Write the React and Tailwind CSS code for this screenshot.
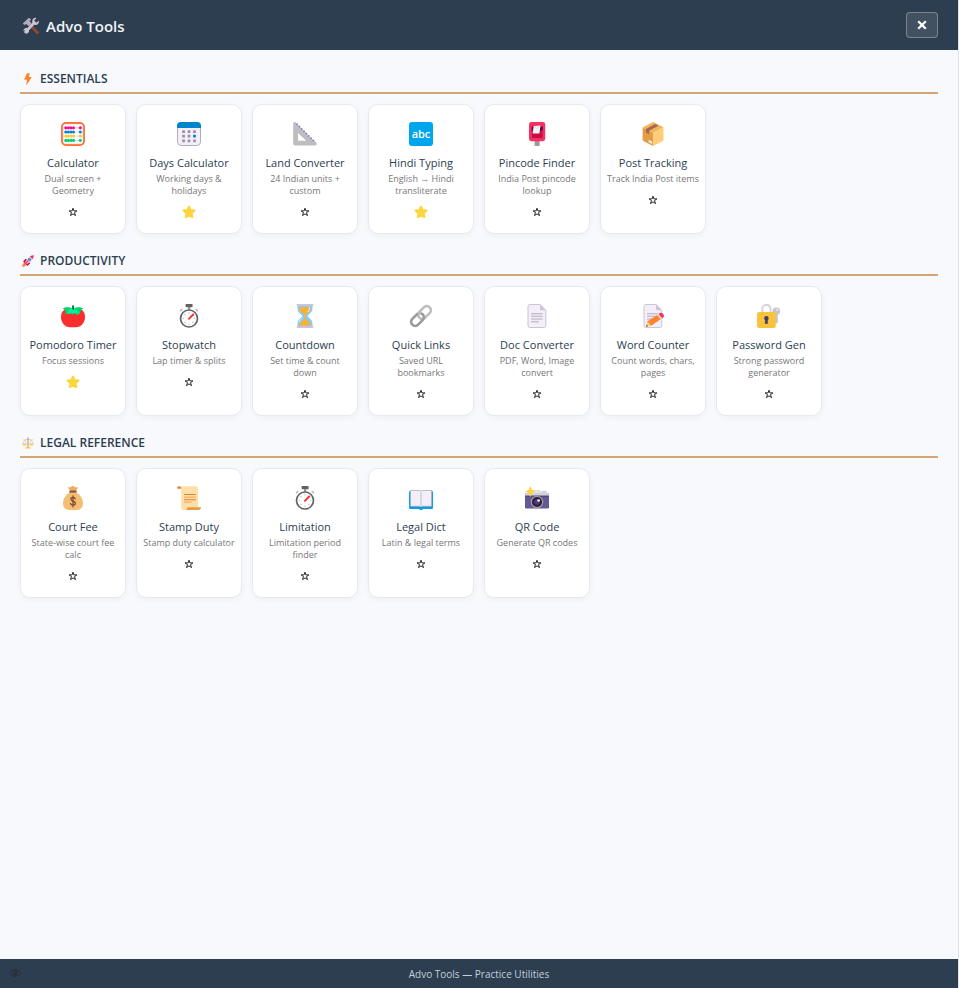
import React, { useState } from "react";

function Icon({ size = "size-6", box = 24, children }) {
  return (
    <svg className={size} viewBox={`0 0 ${box} ${box}`} fill="none" aria-hidden="true">
      {children}
    </svg>
  );
}

function AbacusIcon() {
  const rows = [
    [5.8, "#f70a8d"],
    [10, "#0084ce"],
    [14.1, "#ffc93d"],
    [18.4, "#00d26a"],
  ];
  return (
    <Icon>
      <rect x="1" y="1" width="22" height="22" rx="4" fill="#fff" stroke="#ff6f35" strokeWidth="1.9" />
      <rect x="2.3" y="2.3" width="19.4" height="19.4" rx="2.4" stroke="#e4e4e8" strokeWidth=".8" />
      {rows.map(([y, color]) => (
        <g key={y}>
          <path d={`M2.5 ${y}H21.5`} stroke="#c5c5cc" strokeWidth=".7" />
          <ellipse cx="4.8" cy={y} rx="1.5" ry="1.6" fill={color} />
          <ellipse cx="7.4" cy={y} rx="1.5" ry="1.6" fill={color} />
          <ellipse cx="10" cy={y} rx="1.5" ry="1.6" fill={color} />
          <ellipse cx="12.5" cy={y} rx="1.5" ry="1.6" fill={color} />
          <ellipse cx="19.3" cy={y} rx="1.5" ry="1.6" fill={color} />
        </g>
      ))}
    </Icon>
  );
}

function CalendarIcon() {
  const cells = [];
  [9.7, 14.2, 18.8].forEach((y, r) =>
    [6.6, 12, 17.5].forEach((x, c) =>
      cells.push(
        <rect key={`${r}${c}`} x={x - 1.35} y={y - 1.35} width="2.7" height="2.7" rx=".5" fill={r === 1 && c === 2 ? "#0084ce" : "#998ea4"} />
      )
    )
  );
  return (
    <Icon>
      <rect x=".5" y=".5" width="23" height="23" rx="3.6" fill="#f3eef8" stroke="#b4acbc" strokeWidth="1" />
      <path d="M0 6V4a4 4 0 0 1 4-4h16a4 4 0 0 1 4 4v2z" fill="#0084ce" />
      {cells}
    </Icon>
  );
}

function TriangleIcon() {
  return (
    <Icon>
      <path d="M.2 1.6C.2.2 1.800-.4 2.800.6l20.400 20.300c1 1 .4 2.600-1 2.600H2a1.800 1.800 0 0 1-1.800-1.800zM5 11v6.700a1 1 0 0 0 1 1h7.200z" fill="#bebebe" fillRule="evenodd" />
      <path d="M3.600 1.800 22.500 20.700" stroke="#8d65c5" strokeWidth="1.500" strokeDasharray="1.300 2" />
    </Icon>
  );
}

function AbcIcon() {
  return (
    <span className="flex size-6 items-center justify-center rounded-[3px] bg-[#00a6ed] pb-px font-['Open_Sans','Noto_Sans',sans-serif] text-[11px] leading-5 font-semibold text-white">
      abc
    </span>
  );
}

function PostboxIcon() {
  return (
    <Icon>
      <rect x="9.600" y="18" width="5" height="6" fill="#9b9b9b" />
      <rect x="4" y="0" width="16.200" height="19.200" rx="2.400" fill="#f92f60" />
      <rect x="6.800" y="3.800" width="10.800" height="12.200" rx="1" fill="#ca0b4a" />
      <path d="M6.800 5h10.800v3.400H6.800z" fill="#321b41" />
      <path d="m8.700 4 6.800-.6-1.100 8-6.800.200z" fill="#f4f4f4" />
      <path d="m9.500 4.200 2 2.400 3-2.500" stroke="#d3c9dc" strokeWidth=".7" />
    </Icon>
  );
}

function PackageIcon() {
  return (
    <Icon>
      <path d="M1.600 5.500 12 0l10.500 5.300L12 11z" fill="#f3b45b" />
      <path d="M1.600 5.500 12 10.800V24L2.800 19.200a2 2 0 0 1-1.200-1.800z" fill="#e39d43" />
      <path d="M22.500 5.300 12 10.800V24l9.400-4.800a2 2 0 0 0 1.100-1.800z" fill="#ffce7c" />
      <path d="M5 3.700 8.200 2l9.400 5v3.600l-3.200 1.600V8.700z" fill="#a56953" transform="matrix(-1 0 0 1 22.500 0)" />
      <path d="m7.700 17.700 3.400 1.700v2.500l-3.400-1.700z" fill="#f0eef0" />
    </Icon>
  );
}

function TomatoIcon() {
  return (
    <Icon>
      <path d="M7 4.500h10c4 0 7 3.600 7 8.500 0 6-4 10.200-9 10.200H9C4 23.200 0 19 0 13c0-4.900 3-8.500 7-8.500z" fill="#f92f2f" />
      <path d="M1.600 4.500C5 2.500 8.500 3 11 4.400V2h2v2.400c2.500-1.400 6-1.900 9.200.1-1.400.4-2 1.300-2.500 2.500-.6 1.900-1.900 3.300-4.300 4.300-.2-1.300-.9-2-1.800-2.500L12 11 9.800 8.500C8.300 9.200 6.500 10 4.200 10.400 5 8.500 4.600 5.500 1.600 4.500z" fill="#00d26a" />
      <path d="M8.500 4.900c1-.4 2.200 0 2.700.3h3.300l2.500 1.600 2 3.200-3-.8-3 .1-3.200.3-4 .4c1.200-1.700 1.500-4.200 2.700-5.100z" fill="#00f397" />
      <rect x="11" y="1.300" width="2.100" height="4.500" rx="1" fill="#008463" />
    </Icon>
  );
}

function StopwatchIcon() {
  const ticks = [0, 45, 90, 135, 180, 225, 270, 315];
  return (
    <Icon>
      <rect x="11" y="2" width="2.200" height="4" fill="#9b9b9b" />
      <rect x="8.600" y="-.1" width="7" height="3.300" rx=".8" fill="#636363" />
      <path d="m4.700 5.600-1 1.100M19.300 5.600l1 1.100" stroke="#c4c4c4" strokeWidth="2" strokeLinecap="round" />
      <circle cx="12" cy="14.500" r="8.500" fill="#fff" stroke="#636363" strokeWidth="1.700" />
      {ticks.map((angle) => (
        <path key={angle} d="M12 8.200v1.300" stroke="#b8bec4" strokeWidth="1.200" transform={`rotate(${angle} 12 14.5)`} />
      ))}
      <path d="m11.900 14.800 4.300-4.300" stroke="#f8312f" strokeWidth="1.900" strokeLinecap="round" />
    </Icon>
  );
}

function HourglassIcon() {
  return (
    <Icon>
      <path d="M4.500 1.500h15v2.700c0 4-3.600 5.800-5 7.800 1.400 2 5 3.800 5 7.800v2.700h-15v-2.700c0-4 3.600-5.800 5-7.800-1.400-2-5-3.800-5-7.800z" fill="#83cbff" />
      <path d="M6 3.200h12c0 4-3.200 5.400-5.200 7.400v5c3 1.600 5 3.600 5.200 6H6c.2-2.400 2.400-4.400 5.200-6v-5C9.200 8.600 6 7.200 6 3.200z" fill="#ffb02e" />
      <path d="M16.500 3.500c.4 1.800-.4 3.200-1.600 4.300" stroke="#fff" strokeOpacity=".8" strokeWidth="1" strokeLinecap="round" />
      <path d="M9.300 14c-1.700 1.200-2.800 2.500-3 4" stroke="#fff" strokeOpacity=".7" strokeWidth=".8" strokeLinecap="round" />
      <rect x="3.700" y="0" width="16.600" height="2" rx=".5" fill="#cdc4d6" />
      <rect x="3.700" y="22" width="16.600" height="2" rx=".5" fill="#cdc4d6" />
    </Icon>
  );
}

function LinkIcon() {
  return (
    <Icon>
      <rect x="-4.100" y="-7.300" width="8.200" height="14.600" rx="4.100" transform="translate(15.500 8.500) rotate(45)" stroke="#bebebe" strokeWidth="2.700" />
      <rect x="-4.100" y="-7.300" width="8.200" height="14.600" rx="4.100" transform="translate(8.500 15.500) rotate(45)" stroke="#9b9b9b" strokeWidth="2.700" />
      <path d="m9 10.200 3-3" stroke="#bebebe" strokeWidth="2.700" />
    </Icon>
  );
}

function PageShape() {
  return (
    <>
      <path d="M3 2.400A1.900 1.900 0 0 1 4.900.5h10.300l5.600 5.800v15.300a1.900 1.900 0 0 1-1.900 1.900h-14A1.900 1.900 0 0 1 3 21.600z" fill="#f3eef8" stroke="#cdc4d6" />
      <path d="M15 .5v4.200c0 .9.700 1.600 1.600 1.600h4.200z" fill="#cdc4d6" />
    </>
  );
}

function DocumentIcon() {
  return (
    <Icon>
      <PageShape />
      <path d="M6.500 9.700h10.800M6.500 12.300h10.800M6.500 15h10.800M6.500 17.700h7" stroke="#b4acbc" strokeWidth="1.100" strokeLinecap="round" />
    </Icon>
  );
}

function MemoIcon() {
  return (
    <Icon>
      <PageShape />
      <path d="M6.500 9.700h10M6.500 12.300h9M6.500 15h6M6.500 17.700h3" stroke="#b4acbc" strokeWidth="1.100" strokeLinecap="round" />
      <path d="m5.200 22.600 1.300-5.300 3.700 4.400z" fill="#ffce7c" />
      <path d="m5.200 22.600.5-2 1.300 1.600z" fill="#402a32" />
      <path d="m6.500 17.300 9.700-6.400 3.700 4.200-9.700 6.600z" fill="#ff822d" />
      <path d="m16.200 10.900 1.400-1 3.700 4.300-1.400.9z" fill="#d3d3d3" />
      <path d="m17.600 9.900 1.500-1c1.900-1.100 5 2.500 3.500 4.200l-1.300 1.100z" fill="#f92f60" />
    </Icon>
  );
}

function LockKeyIcon() {
  return (
    <Icon>
      <circle cx="19.300" cy="7.300" r="3.800" fill="#c5c5c5" />
      <circle cx="20.200" cy="5.800" r=".9" fill="#fff" />
      <path d="M18.200 9h2.600v9.700l-1.300 1-1.300-1z" fill="#c5c5c5" />
      <path d="M5.300 9V4.900a4.100 4.100 0 0 1 8.200 0V9" stroke="#d3d3d3" strokeWidth="1.900" />
      <rect x="0" y="8" width="18.800" height="16" rx="2.300" fill="#f9c23c" />
      <circle cx="9.400" cy="14.200" r="2.200" fill="#433b6b" />
      <path d="M8.500 14.500h1.800l.4 5H8.100z" fill="#433b6b" stroke="#433b6b" strokeWidth=".5" />
    </Icon>
  );
}

function MoneyBagIcon() {
  return (
    <Icon>
      <path d="m9.400 5-3-4C8 1.600 9 1.600 10 .8c1-1 2.500-1 3.600 0 1 .9 2.400.7 4 .4L14.600 5z" fill="#f3ad61" />
      <path d="M9 6.500h6c4 1.500 7 6.500 7 11 0 4-2.600 6.500-6.500 6.500h-7C4.600 24 2 21.500 2 17.500c0-4.500 3-9.500 7-11z" fill="#f3bd72" />
      <rect x="8.200" y="4.600" width="7.600" height="2.200" rx="1.100" fill="#8c5543" />
      <path d="M14.200 12.800c-.3-1.100-1-1.500-2.200-1.500-1.400 0-2.200.7-2.200 1.800 0 2.700 4.600 1.400 4.600 4.200 0 1.200-.9 1.900-2.400 1.900-1.400 0-2.300-.6-2.500-1.900M12 9.800v11" stroke="#7d4533" strokeWidth="1.200" strokeLinecap="round" />
    </Icon>
  );
}

function ScrollIcon() {
  return (
    <Icon>
      <path d="M2 .3h16.800A2.200 2.200 0 0 1 21 2.500V22a2 2 0 0 1-2 2H6.200a2 2 0 0 1-2-2V2.500z" fill="#ffdea7" />
      <path d="M0 2C0 .9.800.2 2 .2s2.200.8 2.200 2.500H1.400C.6 2.700 0 2.600 0 2z" fill="#d3883e" />
      <path d="M10.500 21.200H24c0 1.700-1 2.800-2.600 2.800H8.600c1.100-.5 1.700-1.400 1.900-2.800z" fill="#e39d43" />
      <path d="M7 8.500h12M7 13.700h12" stroke="#d3883e" strokeWidth="1.100" />
      <path d="M7 11.100h12M7 16.200h7.500" stroke="#f3ad61" strokeWidth="1.300" />
    </Icon>
  );
}

function BookIcon() {
  return (
    <Icon>
      <path d="M0 6.300A1.300 1.300 0 0 1 1.300 5h21.400A1.300 1.300 0 0 1 24 6.300v15.400a1.300 1.300 0 0 1-1.300 1.300h-8.600c-.4.700-1 1-2.100 1s-1.700-.3-2.100-1H1.300A1.300 1.300 0 0 1 0 21.700z" fill="#00a6ed" />
      <path d="M1 20.500h22v.8h-9.500l-1.500.7-1.500-.7H1z" fill="#0074ba" />
      <path d="M1.500 4.500h8.800c.8 0 1.300.2 1.700.6.400-.4.900-.6 1.700-.6h8.800v15.800h-8.700c-.9 0-1.300.3-1.800.9-.5-.6-.9-.9-1.800-.9H1.500z" fill="#f3eef8" stroke="#b4acbc" strokeWidth=".8" />
      <path d="M12 5.500V21" stroke="#cdc4d6" strokeWidth="1.200" />
    </Icon>
  );
}

function CameraIcon() {
  return (
    <Icon>
      <path d="M15.500 7.500 17 4.700h4l2.200 3z" fill="#d3d3d3" />
      <path d="M8.500 8V5.300c0-.7.500-1.200 1.200-1.200h5c.6 0 1 .3 1.200.8L17 8z" fill="#e1e1e4" />
      <rect x="0" y="7.200" width="24" height="15.300" rx="1.200" fill="#635994" />
      <path d="M0 9.600h24V8.200a1.200 1.200 0 0 0-1.200-1.200H1.200A1.200 1.200 0 0 0 0 8.200z" fill="#d3d3d3" />
      <path d="M0 10.500h24" stroke="#534882" strokeWidth="1.200" />
      <circle cx="12" cy="16" r="6.300" fill="#9b9b9b" />
      <circle cx="12" cy="16" r="5" fill="#321b41" />
      <circle cx="12" cy="16" r="2.800" fill="#4c3c78" />
      <circle cx="13.600" cy="14.500" r="1.300" fill="#fff" />
      <path d="m5.300 1.500 1 2.200c.2.400.4.600.8.800l2.200 1-2.200 1c-.4.200-.6.400-.8.800l-1 2.200-1-2.200c-.2-.4-.4-.6-.8-.8l-2.200-1 2.200-1c.4-.2.600-.4.800-.8z" fill="#fcd53f" stroke="#fcd53f" strokeWidth="1.200" />
    </Icon>
  );
}

function ToolsIcon() {
  return (
    <Icon size="size-[18px]" box={18}>
      <path d="m7.500 7.500 7.800 8" stroke="#8c4a35" strokeWidth="3.200" strokeLinecap="round" />
      <path d="m3.500 15 9-9.500" stroke="#cdc4d6" strokeWidth="2.600" strokeLinecap="round" />
      <path d="M16.800 3.500 14.500 5.800 12.600 5l-.4-1.500L14.500 1c-2.300-.6-4.400 1-4.300 3.600.1 2.100 1.800 3.500 3.800 3.300 2.300-.2 3.400-2.400 2.800-4.400z" fill="#cdc4d6" />
      <path d="M1.500 14.200 3 12.900l1.900.4.300 1.700-1.700 1.700c1.700.3 3.500-.7 3.600-2.600.1-1.700-1.100-3-2.700-3.100-2 0-3.200 1.500-2.900 3.200z" fill="#cdc4d6" />
      <path d="M.8 6.400 6.600.9c1.200.1 2 .6 2.500 1.500L7.500 4l2.200 2.400-3 2.900-2.400-2.400-2 1.200z" fill="#b4acbc" />
    </Icon>
  );
}

function BoltIcon() {
  return (
    <Icon size="size-3" box={12}>
      <path d="M5 .3h2.700L6.900 4h2c.5 0 .7.500.4.900l-4.400 6.700c-.3.400-.7.200-.6-.3l.8-4.500H2.900c-.5 0-.7-.3-.5-.8z" fill="#ff822d" />
    </Icon>
  );
}

function RocketIcon() {
  return (
    <Icon size="size-3" box={12}>
      <path d="M.3 11.700C.2 9.700.8 8.300 2.300 8L4 9.700C3.700 11.200 2.300 11.800.3 11.700z" fill="#ff822d" />
      <path d="M1 6.700 3.200 4h3L3.400 8.600zM5.300 11l2.600-2.200V5.900L3.400 8.600z" fill="#ca0b4a" />
      <path d="M3 7.200C4.500 3.800 6.700 1.600 9 1l2 2c-.6 2.400-2.800 4.600-6.200 6.100z" fill="#e1d8ec" />
      <path d="M8 1.400C9.500.4 10.700.2 11.800.2c0 1.200-.2 2.500-1.200 3.900z" fill="#f92f60" />
      <circle cx="7.600" cy="4.500" r="1.300" fill="#26a0e8" stroke="#83658e" strokeWidth=".5" />
      <path d="m3.200 8.800 2.700-2.700" stroke="#f92f60" strokeWidth="1.400" strokeLinecap="round" />
    </Icon>
  );
}

function ScalesIcon() {
  return (
    <Icon size="size-3" box={12}>
      <path d="M2.600 3 .7 7h3.800zM9.400 3 7.500 7h3.800z" stroke="#d2c8c0" strokeWidth=".6" />
      <path d="M1.500 3c1.800.2 2.800-.7 4.500-.7s2.700.9 4.500.7" stroke="#e0c887" strokeWidth=".9" strokeLinecap="round" />
      <path d="M6 .8v9.500" stroke="#a99d94" strokeWidth="1.100" strokeLinecap="round" />
      <path d="M.2 6.700h4.600C4.500 8 3.700 8.600 2.500 8.600S.5 8 .2 6.700zM7.200 6.700h4.600c-.3 1.300-1.100 1.900-2.300 1.900S7.500 8 7.200 6.700zM3 11.600c0-1 .8-1.500 3-1.500s3 .5 3 1.500z" fill="#fcc94a" />
    </Icon>
  );
}

function EyeIcon() {
  return (
    <Icon size="size-3" box={12}>
      <path d="M.3 6C1.800 3.700 3.800 2.700 6 2.700S10.200 3.700 11.700 6C10.200 8.300 8.200 9.300 6 9.300S1.800 8.300.3 6z" stroke="#262d34" strokeWidth=".9" />
      <circle cx="6" cy="6" r="2.400" fill="#262d34" />
      <circle cx="5.300" cy="5.300" r=".7" fill="#4a5560" />
    </Icon>
  );
}

function StarIcon({ active }) {
  return active ? (
    <Icon size="size-[14px]" box={14}>
      <path d="m7 1.600 1.600 3.300 3.900.6-2.900 2.700.7 3.900L7 10.300l-3.300 1.800.7-3.900-2.900-2.700 3.900-.6z" fill="#fcd53f" stroke="#fcd53f" strokeWidth="2" strokeLinejoin="round" />
    </Icon>
  ) : (
    <Icon size="size-[10px]" box={10}>
      <path d="m5 1.200.9 2.700h3L6.500 5.600l1 3L5 6.900 2.500 8.600l1-3-2.400-1.700h3z" stroke="#111" strokeWidth=".9" />
    </Icon>
  );
}

const sections = [
  {
    title: "ESSENTIALS",
    icon: BoltIcon,
    tools: [
      { name: "Calculator", text: "Dual screen + Geometry", icon: AbacusIcon },
      { name: "Days Calculator", text: "Working days & holidays", icon: CalendarIcon, starred: true },
      { name: "Land Converter", text: "24 Indian units + custom", icon: TriangleIcon },
      { name: "Hindi Typing", text: "English → Hindi transliterate", icon: AbcIcon, starred: true },
      { name: "Pincode Finder", text: "India Post pincode lookup", icon: PostboxIcon },
      { name: "Post Tracking", text: "Track India Post items", icon: PackageIcon },
    ],
  },
  {
    title: "PRODUCTIVITY",
    icon: RocketIcon,
    tools: [
      { name: "Pomodoro Timer", text: "Focus sessions", icon: TomatoIcon, starred: true },
      { name: "Stopwatch", text: "Lap timer & splits", icon: StopwatchIcon },
      { name: "Countdown", text: "Set time & count down", icon: HourglassIcon },
      { name: "Quick Links", text: "Saved URL bookmarks", icon: LinkIcon },
      { name: "Doc Converter", text: "PDF, Word, Image convert", icon: DocumentIcon },
      { name: "Word Counter", text: "Count words, chars, pages", icon: MemoIcon },
      { name: "Password Gen", text: "Strong password generator", icon: LockKeyIcon },
    ],
  },
  {
    title: "LEGAL REFERENCE",
    icon: ScalesIcon,
    tools: [
      { name: "Court Fee", text: "State-wise court fee calc", icon: MoneyBagIcon },
      { name: "Stamp Duty", text: "Stamp duty calculator", icon: ScrollIcon },
      { name: "Limitation", text: "Limitation period finder", icon: StopwatchIcon },
      { name: "Legal Dict", text: "Latin & legal terms", icon: BookIcon },
      { name: "QR Code", text: "Generate QR codes", icon: CameraIcon },
    ],
  },
];

function ToolCard({ tool }) {
  const [starred, setStarred] = useState(Boolean(tool.starred));
  const Glyph = tool.icon;
  return (
    <li className="flex flex-col items-center rounded-[10px] border border-[#e6eaf0] bg-white px-1.5 pt-[15px] pb-3 text-center shadow-[0_2px_6px_rgba(0,0,0,0.04)]">
      <button type="button" className="flex w-full cursor-pointer flex-col items-center">
        <span className="flex h-7 items-center">
          <Glyph />
        </span>
        <span className="mt-[7px] text-[11px] leading-4 whitespace-nowrap text-[#2c3e50]">{tool.name}</span>
        <span className="mt-0.5 text-[9px] leading-3 text-[#777777]">{tool.text}</span>
      </button>
      <button
        type="button"
        aria-label={`Favourite ${tool.name}`}
        aria-pressed={starred}
        onClick={() => setStarred(!starred)}
        className="mt-1.5 flex h-[18px] cursor-pointer items-center"
      >
        <StarIcon active={starred} />
      </button>
    </li>
  );
}

export default function App() {
  return (
    <div className="flex min-h-screen flex-col border-r border-[#dfe1e5] bg-[#f8f9fd] font-['Segoe_UI','Open_Sans','Noto_Sans',sans-serif]">
      <header className="flex h-[50px] items-center justify-between bg-[#2c3e50] px-5">
        <h1 className="flex items-center gap-1.5 pt-0.5 pl-0.5 text-[15px] leading-6 font-semibold text-[#f1f3f5]">
          <ToolsIcon />
          Advo Tools
        </h1>
        <button
          type="button"
          aria-label="Close"
          className="flex h-[26px] w-8 cursor-pointer items-center justify-center rounded border border-white/30 bg-white/10"
        >
          <Icon size="size-[10px]" box={10}>
            <path d="m1.200 1.200 7.600 7.600M8.800 1.200 1.200 8.800" stroke="#fff" strokeWidth="2.300" />
          </Icon>
        </button>
      </header>

      <main className="flex flex-1 flex-col gap-[18px] p-5">
        {sections.map((section) => {
          const SectionIcon = section.icon;
          return (
            <section key={section.title}>
              <h2 className="flex items-center gap-1.5 border-b-2 border-[#d4a574] pb-1 pl-0.5 text-[12px] leading-[18px] font-semibold text-[#2c3e50]">
                <SectionIcon />
                {section.title}
              </h2>
              <ul className="mt-2.5 grid grid-cols-[repeat(auto-fill,minmax(100px,1fr))] gap-2.5">
                {section.tools.map((tool) => (
                  <ToolCard key={tool.name} tool={tool} />
                ))}
              </ul>
            </section>
          );
        })}
      </main>

      <footer className="relative bg-[#2c3e50] pt-2 pb-1.5 text-center text-[10px] leading-[15px] text-[#c3d0dc]">
        <span className="absolute top-2 left-[9px]">
          <EyeIcon />
        </span>
        Advo Tools — Practice Utilities
      </footer>
    </div>
  );
}
